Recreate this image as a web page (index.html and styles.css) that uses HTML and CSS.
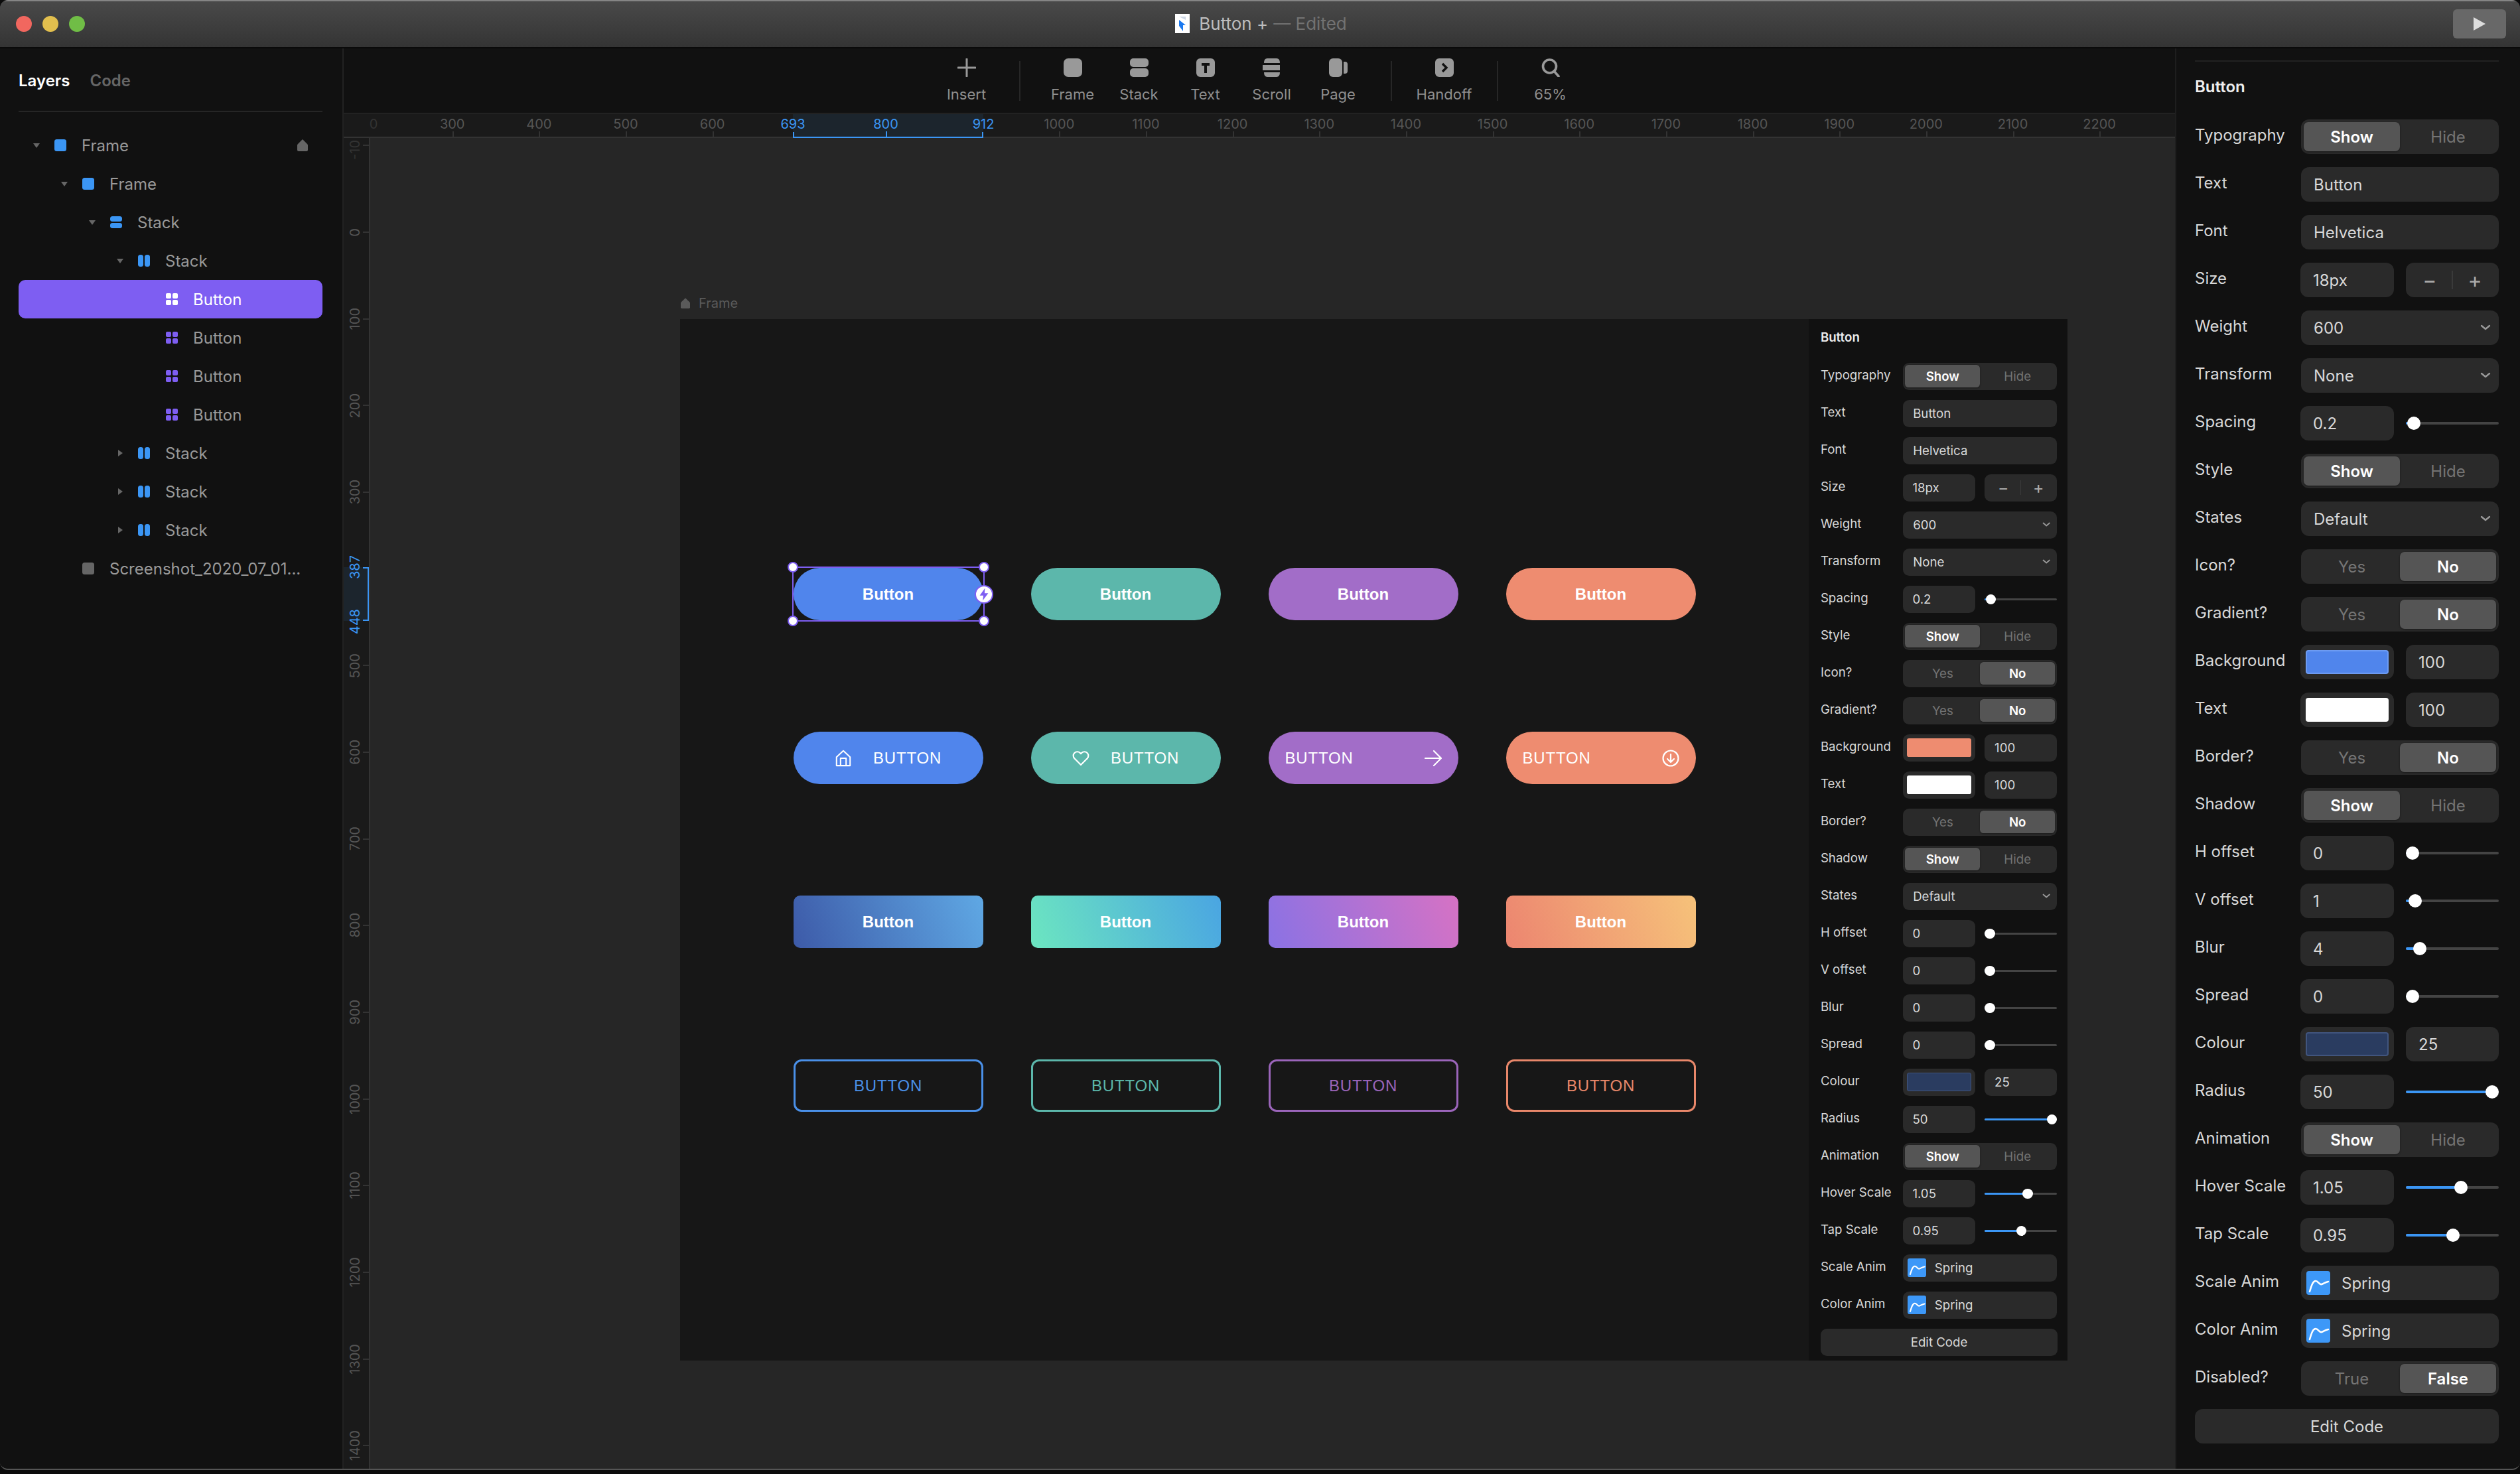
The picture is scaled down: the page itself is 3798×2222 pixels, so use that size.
FILE: index.html
```html
<!DOCTYPE html>
<html lang="en">

<head>
    <meta charset="UTF-8">
    <title>Button +</title>
    <link rel="stylesheet" href="styles.css">
</head>

<body>
    <svg class="defs" aria-hidden="true">
        <symbol id="i-frame" viewBox="0 0 18 18"><rect width="18" height="18" rx="3.5" fill="currentColor"/></symbol>
        <symbol id="i-vstack" viewBox="0 0 18 18"><rect width="18" height="8" rx="3.5" fill="currentColor"/><rect y="10" width="18" height="8" rx="3.5" fill="currentColor"/></symbol>
        <symbol id="i-hstack" viewBox="0 0 18 18"><rect width="8" height="18" rx="3.5" fill="currentColor"/><rect x="10" width="8" height="18" rx="3.5" fill="currentColor"/></symbol>
        <symbol id="i-comp" viewBox="0 0 18 18"><rect width="8" height="8" rx="2" fill="currentColor"/><rect x="10" width="8" height="8" rx="2" fill="currentColor"/><rect y="10" width="8" height="8" rx="2" fill="currentColor"/><rect x="10" y="10" width="8" height="8" rx="2" fill="currentColor"/></symbol>
        <symbol id="i-lock" viewBox="0 0 16 18"><path d="M8 0 L15 7 Q16 8 16 9 V16 Q16 18 14 18 H2 Q0 18 0 16 V9 Q0 8 1 7 Z" fill="currentColor"/></symbol>
        <symbol id="i-chev" viewBox="0 0 16 10"><path d="M2 2 L8 7 L14 2" fill="none" stroke="currentColor" stroke-width="2.4" stroke-linecap="round" stroke-linejoin="round"/></symbol>
        <symbol id="i-spring" viewBox="0 0 36 36"><rect width="36" height="36" rx="4" fill="#3d98f8"/><path d="M5 31 C8 21 10 15 14 15 C18 15 19 21 23 20 C26 19 28 17 33 16" fill="none" stroke="#fff" stroke-width="2.6" stroke-linecap="round"/></symbol>
    </svg>

    <div class="window">
        <header class="titlebar">
            <div class="lights"><i class="red"></i><i class="yellow"></i><i class="green"></i></div>
            <div class="doc">
                <svg class="docIcon" viewBox="0 0 22 29"><rect width="22" height="29" fill="#fff"/><path d="M6 4 L16 4 L16 9 Z" fill="#cfd8e6"/><path d="M6 9 L16 17 L12 17 L12 26 L6 18 Z" fill="#1c7af0"/></svg>
                <span>Button +</span><span class="edited">— Edited</span>
            </div>
            <div class="playWrap">
                <button class="play"><svg viewBox="0 0 18 20" width="18" height="20"><path d="M0 0 L18 10 L0 20 Z" fill="#ddd"/></svg></button>
            </div>
        </header>

        <div class="main">
            <aside class="layers">
                <div class="tabs"><span class="on">Layers</span><span>Code</span></div>
                <div class="tree">
                    <div class="row d1"><b class="arrow"></b><svg class="ic blue"><use href="#i-frame"/></svg><span>Frame</span><svg class="lock"><use href="#i-lock"/></svg></div>
                    <div class="row d2"><b class="arrow"></b><svg class="ic blue"><use href="#i-frame"/></svg><span>Frame</span></div>
                    <div class="row d3"><b class="arrow"></b><svg class="ic blue"><use href="#i-vstack"/></svg><span>Stack</span></div>
                    <div class="row d4"><b class="arrow"></b><svg class="ic blue"><use href="#i-hstack"/></svg><span>Stack</span></div>
                    <div class="row d5 selected"><b class="arrow none"></b><svg class="ic"><use href="#i-comp"/></svg><span>Button</span></div>
                    <div class="row d5"><b class="arrow none"></b><svg class="ic purple"><use href="#i-comp"/></svg><span>Button</span></div>
                    <div class="row d5"><b class="arrow none"></b><svg class="ic purple"><use href="#i-comp"/></svg><span>Button</span></div>
                    <div class="row d5"><b class="arrow none"></b><svg class="ic purple"><use href="#i-comp"/></svg><span>Button</span></div>
                    <div class="row d4"><b class="arrow closed"></b><svg class="ic blue"><use href="#i-hstack"/></svg><span>Stack</span></div>
                    <div class="row d4"><b class="arrow closed"></b><svg class="ic blue"><use href="#i-hstack"/></svg><span>Stack</span></div>
                    <div class="row d4"><b class="arrow closed"></b><svg class="ic blue"><use href="#i-hstack"/></svg><span>Stack</span></div>
                    <div class="row d2"><b class="arrow none"></b><svg class="ic gray"><use href="#i-frame"/></svg><span>Screenshot_2020_07_01...</span></div>
                </div>
            </aside>

            <section class="center">
                <nav class="toolbar">
                    <div class="tool">
                        <svg viewBox="0 0 28 28"><path d="M14 1 V27 M1 14 H27" stroke="#999" stroke-width="3" stroke-linecap="round"/></svg>
                        <span>Insert</span>
                    </div>
                    <i class="sep"></i>
                    <div class="tool">
                        <svg viewBox="0 0 28 28"><rect width="28" height="28" rx="7" fill="#999"/></svg>
                        <span>Frame</span>
                    </div>
                    <div class="tool">
                        <svg viewBox="0 0 28 28"><rect width="28" height="13" rx="5" fill="#999"/><rect y="15" width="28" height="13" rx="5" fill="#999"/></svg>
                        <span>Stack</span>
                    </div>
                    <div class="tool">
                        <svg viewBox="0 0 28 28"><rect width="28" height="28" rx="6" fill="#999"/><path d="M8 7 H20 V11 H16 V22 H12 V11 H8 Z" fill="#111"/></svg>
                        <span>Text</span>
                    </div>
                    <div class="tool">
                        <svg viewBox="0 0 28 28"><path d="M7 0 H21 Q26 0 26 7 H2 Q2 0 7 0 Z M0 10 H26 V18 H0 Z M2 21 H26 Q26 28 21 28 H7 Q2 28 2 21 Z" fill="#999"/></svg>
                        <span>Scroll</span>
                    </div>
                    <div class="tool">
                        <svg viewBox="0 0 28 28"><rect width="20" height="28" rx="6" fill="#999"/><path d="M22 5 H24 Q28 5 28 9 V19 Q28 23 24 23 H22 Z" fill="#999"/></svg>
                        <span>Page</span>
                    </div>
                    <i class="sep"></i>
                    <div class="tool">
                        <svg viewBox="0 0 28 28"><rect width="28" height="28" rx="6" fill="#999"/><path d="M11 8 L17 14 L11 20" fill="none" stroke="#111" stroke-width="3.4"/></svg>
                        <span>Handoff</span>
                    </div>
                    <i class="sep"></i>
                    <div class="tool">
                        <svg viewBox="0 0 28 28"><circle cx="12.5" cy="12" r="10" fill="none" stroke="#999" stroke-width="3.6"/><path d="M19 19 L26 27" stroke="#999" stroke-width="3.6" stroke-linecap="round"/></svg>
                        <span>65%</span>
                    </div>
                </nav>

                <div class="hruler">
                    <div class="hticks">
                        <span class="faint">0</span><span>300</span><span>400</span><span>500</span><span>600</span>
                        <span class="hide">700</span><span class="cur">800</span><span class="hide">900</span>
                        <span>1000</span><span>1100</span><span>1200</span><span>1300</span><span>1400</span><span>1500</span>
                        <span>1600</span><span>1700</span><span>1800</span><span>1900</span><span>2000</span><span>2100</span>
                        <span>2200</span>
                    </div>
                    <div class="hsel"><em>693</em><em>912</em></div>
                </div>

                <div class="stage">
                    <div class="vruler">
                        <div class="vticks">
                            <span class="faint"><u>-10</u></span><span><u>0</u></span><span><u>100</u></span><span><u>200</u></span><span><u>300</u></span>
                            <span class="hide"><u>400</u></span>
                            <span><u>500</u></span><span><u>600</u></span><span><u>700</u></span><span><u>800</u></span><span><u>900</u></span>
                            <span><u>1000</u></span><span><u>1100</u></span><span><u>1200</u></span><span><u>1300</u></span><span><u>1400</u></span>
                        </div>
                        <div class="vsel"><em>387</em><em>448</em></div>
                    </div>

                    <div class="canvas">
                        <div class="frame">
                            <div class="frameLabel"><svg><use href="#i-lock"/></svg>Frame</div>
                            <div class="preview">
                                <div class="grid">
                                    <button class="btn pill c-blue">Button
                                        <div class="selBox">
                                            <i class="h tl"></i><i class="h tr"></i><i class="h bl"></i><i class="h br"></i>
                                            <i class="bolt"><svg viewBox="0 0 24 24"><path d="M13.5 2 L5 14 H11 L10 22 L19 10 H13 Z" fill="#7e5ef2"/></svg></i>
                                        </div>
                                    </button>
                                    <button class="btn pill c-teal">Button</button>
                                    <button class="btn pill c-purple">Button</button>
                                    <button class="btn pill c-orange">Button</button>

                                    <button class="btn pill caps c-blue">
                                        <svg viewBox="0 0 26 28"><path d="M2 12 L13 2 L24 12 V26 H2 Z M8.500 26 V14 H17.500 V26" fill="none" stroke="#fff" stroke-width="2.200" stroke-linejoin="round"/></svg>BUTTON
                                    </button>
                                    <button class="btn pill caps c-teal">
                                        <svg viewBox="0 0 24 24"><path d="M20.840 4.610a5.500 5.500 0 0 0-7.780 0L12 5.670l-1.060-1.060a5.500 5.500 0 0 0-7.780 7.780l1.060 1.060L12 21.230l7.780-7.780 1.060-1.060a5.500 5.500 0 0 0 0-7.780z" fill="none" stroke="#fff" stroke-width="2" stroke-linejoin="round"/></svg>BUTTON
                                    </button>
                                    <button class="btn pill caps apart c-purple">BUTTON
                                        <svg viewBox="0 0 26 26"><path d="M1 13 H25 M14 2 L25 13 L14 24" fill="none" stroke="#fff" stroke-width="2.200" stroke-linecap="round" stroke-linejoin="round"/></svg>
                                    </button>
                                    <button class="btn pill caps apart c-orange">BUTTON
                                        <svg viewBox="0 0 26 26"><circle cx="13" cy="13" r="11.500" fill="none" stroke="#fff" stroke-width="2.200"/><path d="M13 7 V19 M8 14 L13 19 L18 14" fill="none" stroke="#fff" stroke-width="2.200" stroke-linecap="round" stroke-linejoin="round"/></svg>
                                    </button>

                                    <button class="btn grad g-blue">Button</button>
                                    <button class="btn grad g-teal">Button</button>
                                    <button class="btn grad g-purple">Button</button>
                                    <button class="btn grad g-orange">Button</button>

                                    <button class="btn line caps l-blue">BUTTON</button>
                                    <button class="btn line caps l-teal">BUTTON</button>
                                    <button class="btn line caps l-purple">BUTTON</button>
                                    <button class="btn line caps l-orange">BUTTON</button>
                                </div>
                            </div>

                            <div class="props mini">
                                <h3>Button</h3>
                                <div class="propList">
                                    <div class="prop"><label>Typography</label><div class="seg"><b class="on">Show</b><b>Hide</b></div></div>
                                    <div class="prop"><label>Text</label><div class="val">Button</div></div>
                                    <div class="prop"><label>Font</label><div class="val">Helvetica</div></div>
                                    <div class="prop"><label>Size</label><div class="pair"><div class="val">18px</div><div class="val step"><b>−</b><i></i><b>+</b></div></div></div>
                                    <div class="prop"><label>Weight</label><div class="val drop">600<svg><use href="#i-chev"/></svg></div></div>
                                    <div class="prop"><label>Transform</label><div class="val drop">None<svg><use href="#i-chev"/></svg></div></div>
                                    <div class="prop"><label>Spacing</label><div class="pair"><div class="val">0.2</div><div class="slider"><i style="width:12px"></i></div></div></div>
                                    <div class="prop"><label>Style</label><div class="seg"><b class="on">Show</b><b>Hide</b></div></div>
                                    <div class="prop"><label>Icon?</label><div class="seg"><b>Yes</b><b class="on">No</b></div></div>
                                    <div class="prop"><label>Gradient?</label><div class="seg"><b>Yes</b><b class="on">No</b></div></div>
                                    <div class="prop"><label>Background</label><div class="pair"><div class="val swatch"><i class="sw-orange"></i></div><div class="val">100</div></div></div>
                                    <div class="prop"><label>Text</label><div class="pair"><div class="val swatch"><i class="sw-white"></i></div><div class="val">100</div></div></div>
                                    <div class="prop"><label>Border?</label><div class="seg"><b>Yes</b><b class="on">No</b></div></div>
                                    <div class="prop"><label>Shadow</label><div class="seg"><b class="on">Show</b><b>Hide</b></div></div>
                                    <div class="prop"><label>States</label><div class="val drop">Default<svg><use href="#i-chev"/></svg></div></div>
                                    <div class="prop"><label>H offset</label><div class="pair"><div class="val">0</div><div class="slider"><i style="width:10px"></i></div></div></div>
                                    <div class="prop"><label>V offset</label><div class="pair"><div class="val">0</div><div class="slider"><i style="width:10px"></i></div></div></div>
                                    <div class="prop"><label>Blur</label><div class="pair"><div class="val">0</div><div class="slider"><i style="width:10px"></i></div></div></div>
                                    <div class="prop"><label>Spread</label><div class="pair"><div class="val">0</div><div class="slider"><i style="width:10px"></i></div></div></div>
                                    <div class="prop"><label>Colour</label><div class="pair"><div class="val swatch"><i class="sw-navy"></i></div><div class="val">25</div></div></div>
                                    <div class="prop"><label>Radius</label><div class="pair"><div class="val">50</div><div class="slider"><i style="width:130px"></i></div></div></div>
                                    <div class="prop"><label>Animation</label><div class="seg"><b class="on">Show</b><b>Hide</b></div></div>
                                    <div class="prop"><label>Hover Scale</label><div class="pair"><div class="val">1.05</div><div class="slider"><i style="width:83px"></i></div></div></div>
                                    <div class="prop"><label>Tap Scale</label><div class="pair"><div class="val">0.95</div><div class="slider"><i style="width:71px"></i></div></div></div>
                                    <div class="prop"><label>Scale Anim</label><div class="val anim"><svg><use href="#i-spring"/></svg>Spring</div></div>
                                    <div class="prop"><label>Color Anim</label><div class="val anim"><svg><use href="#i-spring"/></svg>Spring</div></div>
                                    <div class="val editCode">Edit Code</div>
                                </div>
                            </div>
                        </div>
                    </div>
                </div>
            </section>

            <aside class="inspector">
                <div class="props">
                    <h3>Button</h3>
                    <div class="propList">
                        <div class="prop"><label>Typography</label><div class="seg"><b class="on">Show</b><b>Hide</b></div></div>
                        <div class="prop"><label>Text</label><div class="val">Button</div></div>
                        <div class="prop"><label>Font</label><div class="val">Helvetica</div></div>
                        <div class="prop"><label>Size</label><div class="pair"><div class="val">18px</div><div class="val step"><b>−</b><i></i><b>+</b></div></div></div>
                        <div class="prop"><label>Weight</label><div class="val drop">600<svg><use href="#i-chev"/></svg></div></div>
                        <div class="prop"><label>Transform</label><div class="val drop">None<svg><use href="#i-chev"/></svg></div></div>
                        <div class="prop"><label>Spacing</label><div class="pair"><div class="val">0.2</div><div class="slider"><i style="width:12px"></i></div></div></div>
                        <div class="prop"><label>Style</label><div class="seg"><b class="on">Show</b><b>Hide</b></div></div>
                        <div class="prop"><label>States</label><div class="val drop">Default<svg><use href="#i-chev"/></svg></div></div>
                        <div class="prop"><label>Icon?</label><div class="seg"><b>Yes</b><b class="on">No</b></div></div>
                        <div class="prop"><label>Gradient?</label><div class="seg"><b>Yes</b><b class="on">No</b></div></div>
                        <div class="prop"><label>Background</label><div class="pair"><div class="val swatch"><i class="sw-blue"></i></div><div class="val">100</div></div></div>
                        <div class="prop"><label>Text</label><div class="pair"><div class="val swatch"><i class="sw-white"></i></div><div class="val">100</div></div></div>
                        <div class="prop"><label>Border?</label><div class="seg"><b>Yes</b><b class="on">No</b></div></div>
                        <div class="prop"><label>Shadow</label><div class="seg"><b class="on">Show</b><b>Hide</b></div></div>
                        <div class="prop"><label>H offset</label><div class="pair"><div class="val">0</div><div class="slider"><i style="width:10px"></i></div></div></div>
                        <div class="prop"><label>V offset</label><div class="pair"><div class="val">1</div><div class="slider"><i style="width:14px"></i></div></div></div>
                        <div class="prop"><label>Blur</label><div class="pair"><div class="val">4</div><div class="slider"><i style="width:21px"></i></div></div></div>
                        <div class="prop"><label>Spread</label><div class="pair"><div class="val">0</div><div class="slider"><i style="width:10px"></i></div></div></div>
                        <div class="prop"><label>Colour</label><div class="pair"><div class="val swatch"><i class="sw-navy"></i></div><div class="val">25</div></div></div>
                        <div class="prop"><label>Radius</label><div class="pair"><div class="val">50</div><div class="slider"><i style="width:130px"></i></div></div></div>
                        <div class="prop"><label>Animation</label><div class="seg"><b class="on">Show</b><b>Hide</b></div></div>
                        <div class="prop"><label>Hover Scale</label><div class="pair"><div class="val">1.05</div><div class="slider"><i style="width:83px"></i></div></div></div>
                        <div class="prop"><label>Tap Scale</label><div class="pair"><div class="val">0.95</div><div class="slider"><i style="width:71px"></i></div></div></div>
                        <div class="prop"><label>Scale Anim</label><div class="val anim"><svg><use href="#i-spring"/></svg>Spring</div></div>
                        <div class="prop"><label>Color Anim</label><div class="val anim"><svg><use href="#i-spring"/></svg>Spring</div></div>
                        <div class="prop"><label>Disabled?</label><div class="seg"><b>True</b><b class="on">False</b></div></div>
                        <div class="val editCode">Edit Code</div>
                    </div>
                </div>
            </aside>
        </div>
    </div>
</body>

</html>
```

FILE: styles.css
```css
html {
    margin: 0;
    height: 100%;
}

body {
    margin: 0;
    height: 100%;
    overflow: hidden;
    background-color: #0b0b0b;
    font-family: 'Inter', 'Liberation Sans', sans-serif;
    font-size: 24px;
}

.defs {
    position: absolute;
    width: 0;
    height: 0;
}

.window {
    height: 2216px;
    display: flex;
    flex-direction: column;
    overflow: hidden;
    border-bottom: 2px solid #555;
    border-radius: 12px 12px 12px 12px;
    box-sizing: border-box;
    background-color: #111;
}

/* title bar */

.titlebar {
    height: 73px;
    flex: none;
    display: grid;
    grid-template-columns: 1fr auto 1fr;
    align-items: center;
    box-sizing: border-box;
    padding: 0 21px 2px 24px;
    background: linear-gradient(#494949, #343434);
    border-top: 2px solid #858585;
    border-bottom: 2px solid #0a0a0a;
}

.lights {
    display: flex;
    gap: 16px;
}

.lights i {
    width: 24px;
    height: 24px;
    border-radius: 50%;
}

.red {
    background-color: #f1675f;
}

.yellow {
    background-color: #e2bf4e;
}

.green {
    background-color: #70bd46;
}

.doc {
    display: flex;
    align-items: center;
    color: #bdbdbd;
    font-size: 26px;
    white-space: pre;
}

.docIcon {
    width: 22px;
    height: 29px;
    margin-right: 14px;
}

.edited {
    color: #727272;
    margin-left: 8px;
}

.playWrap {
    display: flex;
    justify-content: flex-end;
}

.play {
    width: 80px;
    height: 44px;
    display: flex;
    justify-content: center;
    align-items: center;
    border: none;
    border-radius: 6px;
    background-color: #686868;
    padding: 0;
}

/* main columns */

.main {
    flex: 1;
    min-height: 0;
    display: flex;
}

.layers {
    width: 518px;
    flex: none;
    box-sizing: border-box;
    padding: 0 30px 0 28px;
    background-color: #111;
    border-right: 2px solid #222;
}

.tabs {
    height: 96px;
    display: flex;
    align-items: center;
    gap: 30px;
    padding-top: 2px;
    box-sizing: border-box;
    border-bottom: 2px solid #262626;
    color: #666;
    font-weight: 600;
}

.tabs .on {
    color: #fff;
}

.tree {
    padding-top: 21px;
}

.row {
    height: 58px;
    display: flex;
    align-items: center;
    border-radius: 10px;
    color: #999;
    white-space: nowrap;
    box-sizing: border-box;
}

.d1 {
    padding-left: 22px;
}

.d2 {
    padding-left: 64px;
}

.d3 {
    padding-left: 106px;
}

.d4 {
    padding-left: 148px;
}

.d5 {
    padding-left: 190px;
}

.row.selected {
    background-color: #7e5ef2;
    color: #fff;
}

.arrow {
    width: 0;
    height: 0;
    margin-right: 22px;
    border-left: 5px solid transparent;
    border-right: 5px solid transparent;
    border-top: 7px solid #666;
}

.arrow.closed {
    margin-left: 2px;
    margin-right: 23px;
    border-top: 5px solid transparent;
    border-bottom: 5px solid transparent;
    border-left: 7px solid #666;
    border-right: none;
}

.arrow.none {
    border-color: transparent;
}

.ic {
    width: 18px;
    height: 18px;
    margin-right: 23px;
    flex: none;
}

.blue {
    color: #3b96f5;
}

.purple {
    color: #7e5ef2;
}

.gray {
    color: #666;
}

.lock {
    width: 16px;
    height: 18px;
    margin-left: auto;
    margin-right: 22px;
    color: #666;
}

/* toolbar and rulers */

.center {
    flex: 1;
    min-width: 0;
    display: flex;
    flex-direction: column;
}

.toolbar {
    height: 97px;
    flex: none;
    display: flex;
    justify-content: center;
    padding-right: 3px;
    box-sizing: border-box;
    background-color: #111;
}

.tool {
    width: 100px;
    display: flex;
    flex-direction: column;
    align-items: center;
    padding-top: 15px;
    color: #8f8f8f;
    font-size: 22px;
}

.tool svg {
    width: 28px;
    height: 28px;
    margin-bottom: 13px;
}

.sep {
    width: 2px;
    height: 60px;
    margin: 19px 29px 0;
    background-color: #272727;
}

.hruler {
    height: 38px;
    flex: none;
    position: relative;
    overflow: hidden;
    box-sizing: border-box;
    border-top: 2px solid #222;
    background-color: #1a1a1a;
    font-size: 20px;
    color: #555;
}

.hticks {
    display: flex;
    margin-left: -32.3px;
    height: 100%;
    box-sizing: border-box;
    border-bottom: 2px solid #333;
}

.hticks span {
    width: 130.67px;
    flex: none;
    position: relative;
    text-align: center;
    line-height: 30px;
}

.hticks span::after {
    content: '';
    position: absolute;
    left: 50%;
    bottom: 0;
    width: 2px;
    height: 8px;
    background-color: #333;
}

.hticks .hide {
    visibility: hidden;
}

.hticks .faint {
    padding-left: 24px;
    box-sizing: border-box;
    color: #333;
}

.hticks .faint::after {
    display: none;
}

.hticks .cur {
    color: #3b96f5;
}

.hticks .cur::after {
    background-color: #3b96f5;
}

.hsel {
    position: absolute;
    left: 677px;
    top: 0;
    width: 287px;
    height: 36px;
    background-color: rgba(59, 150, 245, 0.09);
    color: #3b96f5;
}

.hsel::after {
    content: '';
    position: absolute;
    left: 0;
    right: 0;
    bottom: 0;
    height: 9px;
    box-sizing: border-box;
    border: 2px solid #3b96f5;
    border-top: none;
}

.hsel em {
    position: absolute;
    top: 0;
    left: 0;
    transform: translateX(-50%);
    font-style: normal;
    line-height: 30px;
}

.hsel em + em {
    left: 100%;
}

.stage {
    flex: 1;
    min-height: 0;
    display: flex;
}

.vruler {
    width: 40px;
    flex: none;
    position: relative;
    overflow: hidden;
    box-sizing: border-box;
    background-color: #1a1a1a;
    border-right: 2px solid #333;
    font-size: 20px;
    color: #555;
}

.vticks {
    margin-top: -54px;
}

.vticks span {
    height: 130.67px;
    display: flex;
    align-items: center;
    justify-content: space-between;
    padding-left: 5px;
    box-sizing: border-box;
}

.vticks span::after {
    content: '';
    width: 9px;
    height: 2px;
    background-color: #333;
}

.vticks u {
    text-decoration: none;
    writing-mode: vertical-rl;
    transform: rotate(180deg);
    line-height: 24px;
}

.vticks .faint {
    color: #333;
}

.vticks .faint u {
    transform: translateY(7px) rotate(180deg);
}

.vticks .hide {
    visibility: hidden;
}

.vsel {
    position: absolute;
    left: 0;
    right: 0;
    top: 647px;
    height: 81px;
    background-color: rgba(59, 150, 245, 0.09);
    color: #3b96f5;
}

.vsel::after {
    content: '';
    position: absolute;
    top: 0;
    bottom: 0;
    right: 0;
    width: 9px;
    box-sizing: border-box;
    border: 2px solid #3b96f5;
    border-left: none;
}

.vsel em {
    position: absolute;
    left: 5px;
    top: -18px;
    font-style: normal;
    writing-mode: vertical-rl;
    transform: rotate(180deg);
    line-height: 24px;
}

.vsel em + em {
    top: 63px;
}

/* canvas */

.canvas {
    flex: 1;
    min-width: 0;
    position: relative;
    overflow: hidden;
    background-color: #262626;
}

.frame {
    position: absolute;
    left: 467px;
    top: 273px;
    width: 2091px;
    height: 1570px;
    display: flex;
    background-color: #171717;
}

.frameLabel {
    position: absolute;
    left: 1px;
    top: -36px;
    display: flex;
    align-items: center;
    gap: 13px;
    color: #5a5a5a;
    font-size: 20px;
}

.frameLabel svg {
    width: 14px;
    height: 16px;
}

.preview {
    flex: 1;
    display: flex;
    justify-content: center;
    align-items: center;
}

.grid {
    display: grid;
    grid-template-columns: repeat(4, 286px);
    grid-auto-rows: 79px;
    column-gap: 72px;
    row-gap: 168px;
}

.btn {
    position: relative;
    padding: 0;
    border: none;
    color: #fff;
    font-family: 'Liberation Sans', Arial, sans-serif;
    font-size: 24px;
    font-weight: 700;
    display: flex;
    justify-content: center;
    align-items: center;
}

.btn svg {
    width: 26px;
    height: 26px;
}

.pill {
    border-radius: 40px;
}

.caps {
    font-weight: 400;
    letter-spacing: 0.8px;
    gap: 32px;
}

.apart {
    justify-content: space-between;
    padding: 0 25px;
}

.c-blue {
    background-color: #5085ec;
}

.c-teal {
    background-color: #5cb7ab;
}

.c-purple {
    background-color: #a26dc8;
}

.c-orange {
    background-color: #ee8c70;
}

.grad {
    border-radius: 10px;
}

.g-blue {
    background: linear-gradient(70deg, #3d5aa8, #5fa8e4);
}

.g-teal {
    background: linear-gradient(70deg, #6ce6c0, #4aa5e2);
}

.g-purple {
    background: linear-gradient(70deg, #8a72e4, #d672c4);
}

.g-orange {
    background: linear-gradient(70deg, #ec8570, #f6c27a);
}

.line {
    border-radius: 12px;
    border: 3px solid;
    background-color: transparent;
}

.l-blue {
    color: #4a90e8;
}

.l-teal {
    color: #5cb7ab;
}

.l-purple {
    color: #9b65ba;
}

.l-orange {
    color: #e8876a;
}

.selBox {
    position: absolute;
    inset: -2px;
    border: 2px solid #7e5ef2;
    border-radius: 0;
}

.h {
    position: absolute;
    width: 16px;
    height: 16px;
    box-sizing: border-box;
    border: 2px solid #7e5ef2;
    border-radius: 50%;
    background-color: #fff;
}

.tl {
    left: -9px;
    top: -9px;
}

.tr {
    right: -9px;
    top: -9px;
}

.bl {
    left: -9px;
    bottom: -9px;
}

.br {
    right: -9px;
    bottom: -9px;
}

.bolt {
    position: absolute;
    right: -15px;
    top: 26px;
    width: 28px;
    height: 28px;
    box-sizing: border-box;
    border: 2px solid #7e5ef2;
    border-radius: 50%;
    background-color: #fff;
    display: flex;
    justify-content: center;
    align-items: center;
}

.bolt svg {
    width: 22px;
    height: 22px;
}

/* property panels, the one inside the frame is the same panel zoomed down */

.inspector {
    width: 520px;
    flex: none;
    box-sizing: border-box;
    padding: 18px 32px 0 28px;
    background-color: #111;
    border-left: 2px solid #1e1e1e;
}

.props {
    border-top: 2px solid #222;
}

.props h3 {
    margin: 24px 0 35px;
    height: 28px;
    font-size: 24px;
    line-height: 28px;
    font-weight: 600;
    color: #eee;
}

.props.mini {
    zoom: 0.778;
    width: 501.3px;
    flex: none;
    box-sizing: border-box;
    padding: 0 19px 0 23px;
    background-color: #111;
    border-top: none;
}

.mini h3 {
    margin-top: 22px;
}

.propList {
    display: flex;
    flex-direction: column;
    gap: 20px;
}

.prop {
    height: 52px;
    display: grid;
    grid-template-columns: 160px 298px;
    align-items: center;
}

.prop label {
    color: #d8d8d8;
    padding-bottom: 6px;
    white-space: nowrap;
}

.val {
    height: 52px;
    display: flex;
    align-items: center;
    box-sizing: border-box;
    padding: 0 19px;
    border-radius: 12px;
    background-color: #2a2a2a;
    color: #d8d8d8;
}

.pair {
    display: grid;
    grid-template-columns: 140px 140px;
    column-gap: 18px;
    align-items: center;
}

.pair > .val:first-child {
    margin-left: -1px;
}

.drop {
    justify-content: space-between;
    padding-right: 12px;
}

.drop svg {
    width: 16px;
    height: 10px;
    color: #999;
}

.step {
    justify-content: space-around;
    padding: 0 14px;
}

.step b {
    font-weight: 400;
    font-size: 32px;
    color: #aaa;
}

.step i {
    width: 2px;
    height: 28px;
    background-color: #3a3a3a;
}

.seg {
    height: 52px;
    display: grid;
    grid-template-columns: 1fr 1fr;
    box-sizing: border-box;
    padding: 4px;
    border-radius: 12px;
    background-color: #2a2a2a;
}

.seg b {
    display: flex;
    justify-content: center;
    align-items: center;
    border-radius: 7px;
    font-weight: 400;
    color: #747474;
}

.seg b.on {
    background-color: #555;
    color: #fff;
    font-weight: 600;
    box-shadow: 0 1px 3px rgba(0, 0, 0, 0.4);
}

.slider {
    height: 4px;
    border-radius: 2px;
    background-color: #444;
}

.slider i {
    display: block;
    position: relative;
    height: 100%;
    border-radius: 2px;
    background-color: #3b96f5;
}

.slider i::after {
    content: '';
    position: absolute;
    right: -10px;
    top: -8px;
    width: 20px;
    height: 20px;
    border-radius: 50%;
    background-color: #fff;
}

.swatch {
    padding: 0 8px;
}

.swatch i {
    width: 100%;
    height: 36px;
    box-sizing: border-box;
    border-radius: 4px;
    border: 2px solid transparent;
}

.sw-blue {
    background-color: #5085ec;
    border-color: #6d9bf2 !important;
}

.sw-orange {
    background-color: #ee8c70;
}

.sw-white {
    background-color: #fff;
}

.sw-navy {
    background-color: #2a3c60;
    border-color: #41557e !important;
}

.anim {
    padding-left: 8px;
}

.anim svg {
    width: 36px;
    height: 36px;
    margin-right: 17px;
}

.editCode {
    justify-content: center;
    padding: 0;
}
```
